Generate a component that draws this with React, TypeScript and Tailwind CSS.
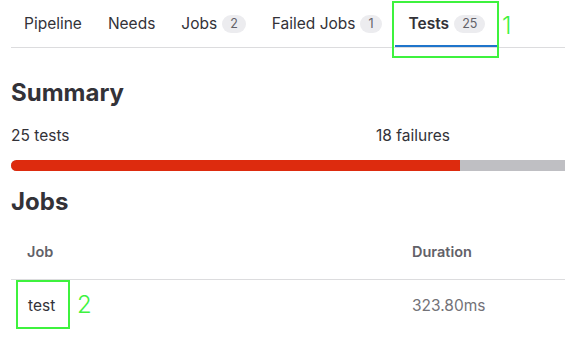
import React from 'react';

// ─── Data ─────────────────────────────────────────────────────────────────────

const TABS = [
    { label: 'Pipeline' },
    { label: 'Needs' },
    { label: 'Jobs', count: 2 },
    { label: 'Failed Jobs', count: 1 },
    { label: 'Tests', count: 25, active: true },
];

const TOTAL = 25;
const FAILED = 18;

// ─── Component ────────────────────────────────────────────────────────────────

export default function App() {
    const failedPct = (FAILED / TOTAL) * 100;

    return (
        <div
            className="relative w-[565px] h-[341px] overflow-hidden bg-white text-[#333238]"
            style={{ fontFamily: 'Inter, "Noto Sans", sans-serif' }}
        >
            <div className="w-[635px] pl-[11px]">
                {/* Tabs */}
                <div className="flex h-[48px] border-b border-[#dcdcde]">
                    {TABS.map(tab => (
                        <div
                            key={tab.label}
                            className={`flex items-center gap-[5px] text-[15.5px] ${
                                tab.active
                                    ? 'pl-[14px] pr-[13px] font-semibold shadow-[inset_0_-2px_0_#1f75cb]'
                                    : 'px-[13px]'
                            }`}
                        >
                            <span>{tab.label}</span>
                            {tab.count !== undefined && (
                                <span className="rounded-full bg-[#ececef] px-[8px] h-[18px] leading-[18px] text-[12.5px] font-normal text-[#626168]">
                                    {tab.count}
                                </span>
                            )}
                        </div>
                    ))}
                </div>

                {/* Summary */}
                <h2 className="mt-[30px] text-[24px] font-bold leading-[30px]">Summary</h2>
                <div className="mt-[18px] flex text-[15.5px] leading-[20px]">
                    <span className="w-[365px]">{TOTAL} tests</span>
                    <span>{FAILED} failures</span>
                </div>
                <div className="mt-[14px] flex h-[11px] overflow-hidden rounded-full bg-[#bfbfc3]">
                    <div className="h-full bg-[#dd2b0e]" style={{ width: `${failedPct}%` }} />
                </div>

                {/* Jobs */}
                <h2 className="mt-[16px] text-[24px] font-bold leading-[30px]">Jobs</h2>
                <div className="mt-[14px] flex h-[49px] items-center pb-[6px] border-b border-[#dcdcde] text-[14.5px] font-semibold text-[#626168]">
                    <span className="w-[401px] pl-[16px]">Job</span>
                    <span>Duration</span>
                </div>
                <div className="flex h-[52px] items-center text-[15.5px]">
                    <span className="w-[401px] pl-[17px]">test</span>
                    <span className="text-[#737278]">323.80ms</span>
                </div>
            </div>

            {/* Annotations */}
            <div className="absolute left-[392px] top-[1px] h-[57px] w-[107px] border-2 border-[#3ef23e]" />
            <span className="absolute left-[502px] top-[11px] text-[24px] font-light leading-[30px] text-[#3ef23e]">1</span>
            <div className="absolute left-[16px] top-[280px] h-[49px] w-[54px] border-2 border-[#3ef23e]" />
            <span className="absolute left-[77px] top-[290px] text-[24px] font-light leading-[30px] text-[#3ef23e]">2</span>
        </div>
    );
}
